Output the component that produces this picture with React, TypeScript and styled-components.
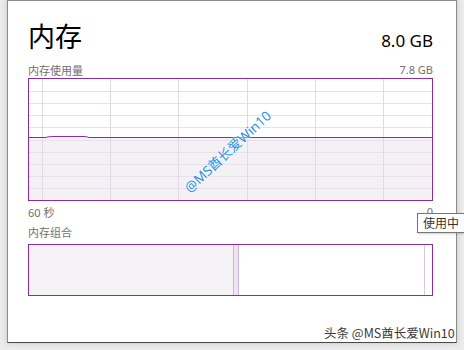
import { FunctionComponent } from 'react';
import styled, { createGlobalStyle } from 'styled-components';

const GlobalStyle = createGlobalStyle`
    html, body {
        margin: 0;
        padding: 0;
        background: #ececec;
        width: 464px;
        height: 350px;
        overflow: hidden;
    }
    * { box-sizing: border-box; }
`;

const purple = '#8a2ca2';

const Window = styled.div`
    position: relative;
    margin-left: 7px;
    width: 450px;
    height: 343px;
    background: #ffffff;
    border: 1px solid #8c8c8c;
    border-bottom-color: #4a4a4a;
    box-shadow: 0 0 6px rgba(0, 0, 0, 0.18);
    padding: 15px 23px 0 20px;
    font-family: 'Noto Sans', 'Noto Sans CJK SC', sans-serif;
`;

const Header = styled.header`
    display: flex;
    justify-content: space-between;
    align-items: baseline;
    height: 45px;
`;

const Title = styled.h1`
    margin: 0;
    font-family: 'Noto Sans CJK SC', sans-serif;
    font-size: 27px;
    font-weight: 400;
    line-height: 40px;
    color: #000;
`;

const Total = styled.span`
    font-size: 17px;
    line-height: 40px;
    color: #000;
`;

const LabelRow = styled.div<{ $gap?: number }>`
    display: flex;
    justify-content: space-between;
    align-items: center;
    height: 17px;
    margin-top: ${p => p.$gap ?? 0}px;
    font-family: 'Noto Sans', 'Noto Sans CJK SC', sans-serif;
    font-size: 11px;
    color: #707070;
`;

const Graph = styled.div<{ $height: number; $gap?: number }>`
    position: relative;
    height: ${p => p.$height}px;
    margin-top: ${p => p.$gap ?? 0}px;
    border: 1px solid ${purple};
    background: #fff;
    overflow: hidden;
`;

const Plot = styled.svg`
    display: block;
    width: 100%;
    height: 100%;
`;

const Watermark = styled.span`
    position: absolute;
    left: 157px;
    top: 100px;
    transform: rotate(-43deg);
    transform-origin: left center;
    font-family: 'Noto Sans', 'Noto Sans CJK SC', sans-serif;
    font-size: 13.5px;
    color: #2e8fe6;
    white-space: nowrap;
    text-shadow: 0 0 2px #fff, 0 0 2px #fff;
`;

const Tooltip = styled.div`
    position: absolute;
    left: 417px;
    top: 213px;
    width: 47px;
    height: 20px;
    padding-left: 5px;
    background: #fff;
    border: 1px solid #767676;
    border-right: none;
    box-shadow: 1px 1px 2px rgba(0, 0, 0, 0.2);
    font-family: 'Noto Sans CJK SC', sans-serif;
    font-size: 12px;
    line-height: 18px;
    color: #333;
    white-space: nowrap;
`;

const Credit = styled.div`
    position: absolute;
    left: 316px;
    top: 322px;
    font-family: 'Noto Sans CJK SC', sans-serif;
    font-size: 12.5px;
    color: #3a3a3a;
    white-space: nowrap;
    text-shadow: 0 0 2px #fff, 0 0 2px #fff;
`;

const W = 403;
const H = 121;
const vLines = [13, 81, 149, 218, 286, 354];
const hLines = Array.from({ length: 9 }, (_, i) => Math.round((i + 1) * 12.1));
const usageY = 58.5;

const UsageChart: FunctionComponent = () => (
    <Plot viewBox={`0 0 ${W} ${H}`} preserveAspectRatio="none">
        <rect x="0" y={usageY} width={W} height={H - usageY} fill="#f4f1f5" />
        {hLines.map(y => (
            <line key={y} x1="0" x2={W} y1={y + 0.5} y2={y + 0.5} stroke="#e9dfed" strokeWidth="1" />
        ))}
        {vLines.map(x => (
            <line key={x} x1={x + 0.5} x2={x + 0.5} y1="0" y2={H} stroke="#e3d8e8" strokeWidth="1" />
        ))}
        <path d={`M0 ${usageY} H16 Q20 ${usageY - 1} 24 ${usageY - 1} H55 Q58 ${usageY - 1} 60 ${usageY} H${W}`} fill="none" stroke={purple} strokeWidth="1" />
    </Plot>
);

const CompositionChart: FunctionComponent = () => (
    <Plot viewBox="0 0 403 50" preserveAspectRatio="none">
        <rect x="0" y="0" width="204" height="50" fill="#f4f2f4" />
        <rect x="204" y="0" width="5" height="50" fill="#ede5f1" />
        <line x1="204.5" x2="204.5" y1="0" y2="50" stroke="#cdb3da" />
        <line x1="209.5" x2="209.5" y1="0" y2="50" stroke="#cdb3da" />
        <line x1="395.5" x2="395.5" y1="0" y2="50" stroke="#d9c6e2" />
    </Plot>
);

const App: FunctionComponent = () => (
    <>
        <GlobalStyle />
        <Window>
            <Header>
                <Title>内存</Title>
                <Total>8.0 GB</Total>
            </Header>
            <LabelRow>
                <span>内存使用量</span>
                <span>7.8 GB</span>
            </LabelRow>
            <Graph $height={123}>
                <UsageChart />
                <Watermark>@MS酋长爱Win10</Watermark>
            </Graph>
            <LabelRow $gap={2}>
                <span>60 秒</span>
                <span>0</span>
            </LabelRow>
            <LabelRow $gap={3}>
                <span>内存组合</span>
            </LabelRow>
            <Graph $height={52} $gap={4}>
                <CompositionChart />
            </Graph>
            <Credit>头条 @MS酋长爱Win10</Credit>
        </Window>
        <Tooltip>使用中</Tooltip>
    </>
);

export default App;
